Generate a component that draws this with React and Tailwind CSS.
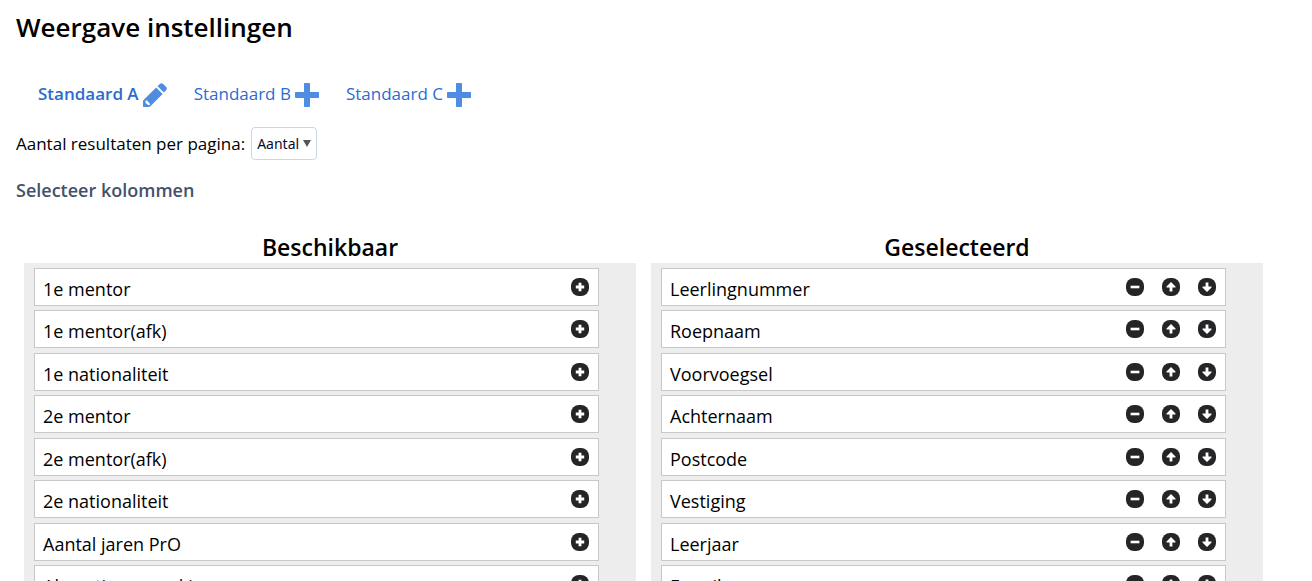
import React, { useState } from 'react';

const views = [
  { name: 'Standaard A', active: true },
  { name: 'Standaard B', active: false },
  { name: 'Standaard C', active: false },
];

const initialAvailable = [
  '1e mentor',
  '1e mentor(afk)',
  '1e nationaliteit',
  '2e mentor',
  '2e mentor(afk)',
  '2e nationaliteit',
  'Aantal jaren PrO',
  'Absentie eenmaking',
];

const initialSelected = [
  'Leerlingnummer',
  'Roepnaam',
  'Voorvoegsel',
  'Achternaam',
  'Postcode',
  'Vestiging',
  'Leerjaar',
  'E-mail',
];

function PencilIcon() {
  return (
    <svg className="size-6" viewBox="0 0 24 24" fill="#4f8de2" aria-hidden="true">
      <path d="M14.6 3.2 16.8 1Q18.4-.6 20.2 1L23 3.8Q24.7 5.5 23.1 7.2L20.9 9.4Z" />
      <path fillRule="evenodd" d="M13.2 4.5 19.6 10.9 7.6 22.9Q6.6 23.9 5.4 23.9H.6Q0 23.9 0 23.3V18.6Q0 17.5.8 16.8ZM2.9 17.3Q2 18.4 2.7 19.9L4.6 21.8Q6.2 22.2 7.1 21.4 6.7 20.2 5.5 18.9 4.2 17.6 2.9 17.3Z" />
    </svg>
  );
}

function PlusIcon() {
  return (
    <svg className="size-6" viewBox="0 0 24 24" fill="#4f8de2" aria-hidden="true">
      <path d="M9.7 0H14.3Q15 0 15 .7V9H23.3Q24 9 24 9.7V14.3Q24 15 23.3 15H15V23.3Q15 24 14.3 24H9.7Q9 24 9 23.3V15H.7Q0 15 0 14.3V9.7Q0 9 .7 9H9V.7Q9 0 9.7 0Z" />
    </svg>
  );
}

const glyphs = {
  plus: 'M7.6 4.8H10.4V7.6H13.2V10.4H10.4V13.2H7.6V10.4H4.8V7.6H7.6Z',
  minus: 'M4.6 7.7H13.4V10.3H4.6Z',
  up: 'M9 4 13.5 8.6V9.6H10.4V13.4H7.6V9.6H4.5V8.6Z',
  down: 'M9 14 4.5 9.4V8.4H7.6V4.6H10.4V8.4H13.5V9.4Z',
};

function RoundButton({ glyph, label, onClick }) {
  return (
    <button type="button" aria-label={label} onClick={onClick} className="cursor-pointer">
      <svg className="size-[18px]" viewBox="0 0 18 18" aria-hidden="true">
        <rect width="18" height="18" rx="8" fill="#252527" />
        <path d={glyphs[glyph]} fill="#fff" />
      </svg>
    </button>
  );
}

function ColumnList({ title, items, children }) {
  return (
    <section className="min-w-0 flex-1">
      <h2 className="text-center text-[23px] leading-8 font-semibold">{title}</h2>
      <ul className="bg-[#ededed] pt-[5px] pr-[37px] pl-[10px]">
        {items.map((item, i) => (
          <li
            key={item}
            className="flex h-[38px] items-center justify-between border border-[#c8c8c8] bg-white pr-[9px] pl-2 odd:mb-1 even:mb-[5px]"
          >
            <span className="pt-1 text-lg leading-6">{item}</span>
            <span className="flex gap-[18px]">{children(item, i)}</span>
          </li>
        ))}
      </ul>
    </section>
  );
}

export default function App() {
  const [available, setAvailable] = useState(initialAvailable);
  const [selected, setSelected] = useState(initialSelected);

  const addColumn = (item) => {
    setAvailable(available.filter((a) => a !== item));
    setSelected([...selected, item]);
  };

  const removeColumn = (item) => {
    setSelected(selected.filter((s) => s !== item));
    setAvailable([...available, item]);
  };

  const moveColumn = (from, to) => {
    if (to < 0 || to >= selected.length) return;
    const next = [...selected];
    [next[from], next[to]] = [next[to], next[from]];
    setSelected(next);
  };

  return (
    <div className="h-screen overflow-hidden bg-white font-['Open_Sans',sans-serif] text-black">
      <h1 className="px-4 pt-[7px] text-[26px] leading-10 font-semibold">Weergave instellingen</h1>

      <nav className="flex gap-[27px] pt-9 pl-[38px]">
        {views.map((view) => (
          <a key={view.name} href="#" className="flex h-6 items-center gap-1 text-[17px] text-[#2b6bd1]">
            <span className={view.active ? 'pb-0.5 leading-6 font-semibold' : 'pb-0.5 leading-6'}>{view.name}</span>
            {view.active ? <PencilIcon /> : <PlusIcon />}
          </a>
        ))}
      </nav>

      <div className="flex items-center gap-1.5 px-4 pt-5">
        <label htmlFor="page-size" className="text-[17px] leading-6">
          Aantal resultaten per pagina:
        </label>
        <div className="relative">
          <select
            id="page-size"
            className="h-[33px] w-[66px] appearance-none rounded border border-[#c9d6e3] bg-white pl-[5px] font-['Noto_Sans',sans-serif] text-sm text-[#0a0a2e]"
          >
            <option>Aantal</option>
          </select>
          <svg className="pointer-events-none absolute top-[13px] right-[6px] h-[7px] w-2" viewBox="0 0 8 7" aria-hidden="true">
            <path d="M0 0H8L4 7Z" fill="#555" />
          </svg>
        </div>
      </div>

      <h3 className="px-4 pt-[18px] text-lg leading-6 font-semibold text-[#42526b]">Selecteer kolommen</h3>

      <div className="flex gap-[15px] pt-[29px] pr-[49px] pl-6">
        <ColumnList title="Beschikbaar" items={available}>
          {(item) => <RoundButton glyph="plus" label={`${item} toevoegen`} onClick={() => addColumn(item)} />}
        </ColumnList>
        <ColumnList title="Geselecteerd" items={selected}>
          {(item, i) => (
            <>
              <RoundButton glyph="minus" label={`${item} verwijderen`} onClick={() => removeColumn(item)} />
              <RoundButton glyph="up" label={`${item} omhoog`} onClick={() => moveColumn(i, i - 1)} />
              <RoundButton glyph="down" label={`${item} omlaag`} onClick={() => moveColumn(i, i + 1)} />
            </>
          )}
        </ColumnList>
      </div>
    </div>
  );
}
